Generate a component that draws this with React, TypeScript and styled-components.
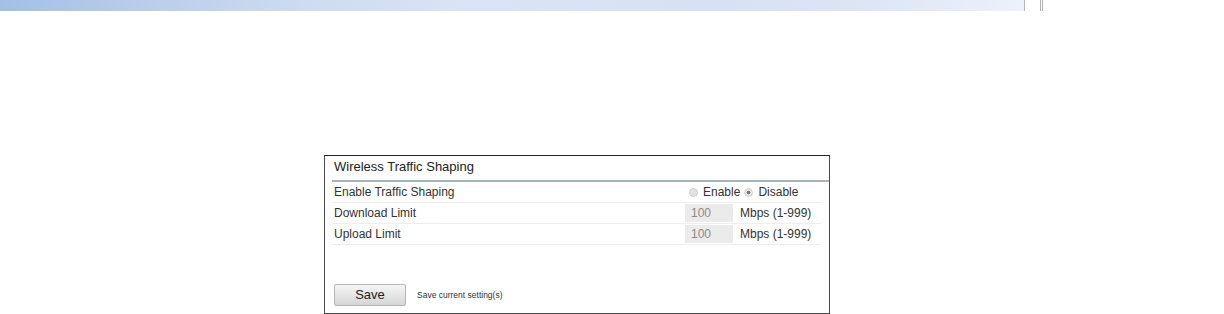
import React from "react";
import styled, { createGlobalStyle } from "styled-components";

const GlobalStyle = createGlobalStyle`
  html, body {
    margin: 0;
    padding: 0;
    background: #ffffff;
    font-family: "Liberation Sans", Arial, sans-serif;
  }
`;

const Page = styled.div`
  width: 1224px;
  height: 314px;
  overflow: hidden;
`;

const TopBar = styled.div`
  display: flex;
  height: 11px;
`;

const BarFill = styled.div`
  width: 1024px;
  border-right: 1px solid #b8b8b8;
  background: linear-gradient(
    to right,
    #a2bfe6 0%,
    #b7cbe9 12%,
    #cddcf0 30%,
    #d9e4f4 45%,
    #d6e1f3 70%,
    #dce6f5 85%,
    #edf1fb 100%
  );
`;

const BarEdge = styled.div`
  width: 15px;
  border-right: 3px double #b0b0b0;
`;

const Content = styled.div`
  padding: 144px 0 0 324px;
`;

const Panel = styled.section`
  width: 497px;
  height: 157px;
  border: 1px solid #4a4a4a;
  border-top-color: #222;
  display: flex;
  flex-direction: column;
  padding: 0 0 0 7px;
`;

const Title = styled.h2`
  margin: 0;
  height: 24px;
  line-height: 22px;
  font-size: 13px;
  font-weight: normal;
  color: #222;
  padding-left: 2px;
  border-bottom: 2px solid #a4b7b9;
`;

const Row = styled.div`
  display: flex;
  align-items: center;
  height: 20px;
  margin-right: 8px;
  border-bottom: 1px solid #eeeeee;
  font-size: 12px;
  color: #333;
`;

const Label = styled.span`
  flex: 1;
  padding-left: 2px;
`;

const Value = styled.div`
  display: flex;
  align-items: center;
  width: 136px;
`;

const Radio = styled.span<{ $checked?: boolean }>`
  flex-shrink: 0;
  width: 7px;
  height: 7px;
  border-radius: 50%;
  border: 1px solid #cfcfcf;
  background: ${({ $checked }) =>
    $checked
      ? "radial-gradient(circle, #7a7a7a 0 1.6px, #e8e8e8 2.2px)"
      : "#e3e3e3"};
  margin: 0 5px 0 4px;
`;

const Input = styled.span`
  width: 42px;
  height: 18px;
  line-height: 18px;
  padding-left: 6px;
  background: #ebebeb;
  color: #8a8a8a;
  font-size: 12px;
  margin-right: 7px;
`;

const Spacer = styled.div`
  flex: 1;
`;

const Footer = styled.div`
  display: flex;
  align-items: center;
  gap: 11px;
  height: 22px;
  margin-bottom: 7px;
  padding-left: 2px;
`;

const SaveButton = styled.button`
  width: 72px;
  height: 22px;
  border: 1px solid #b5b5b5;
  border-radius: 2px;
  background: linear-gradient(to bottom, #f5f5f5, #d6d6d6);
  font-family: "Liberation Sans", Arial, sans-serif;
  font-size: 13px;
  color: #222;
  padding: 0 0 2px;
`;

const Hint = styled.span`
  font-size: 8.5px;
  color: #333;
`;

export default function App() {
  return (
    <Page>
      <GlobalStyle />
      <TopBar>
        <BarFill />
        <BarEdge />
      </TopBar>
      <Content>
        <Panel>
          <Title>Wireless Traffic Shaping</Title>
          <Row>
            <Label>Enable Traffic Shaping</Label>
            <Value>
              <Radio />
              Enable
              <Radio $checked />
              Disable
            </Value>
          </Row>
          <Row>
            <Label>Download Limit</Label>
            <Value>
              <Input>100</Input>
              Mbps (1-999)
            </Value>
          </Row>
          <Row>
            <Label>Upload Limit</Label>
            <Value>
              <Input>100</Input>
              Mbps (1-999)
            </Value>
          </Row>
          <Spacer />
          <Footer>
            <SaveButton>Save</SaveButton>
            <Hint>Save current setting(s)</Hint>
          </Footer>
        </Panel>
      </Content>
    </Page>
  );
}
